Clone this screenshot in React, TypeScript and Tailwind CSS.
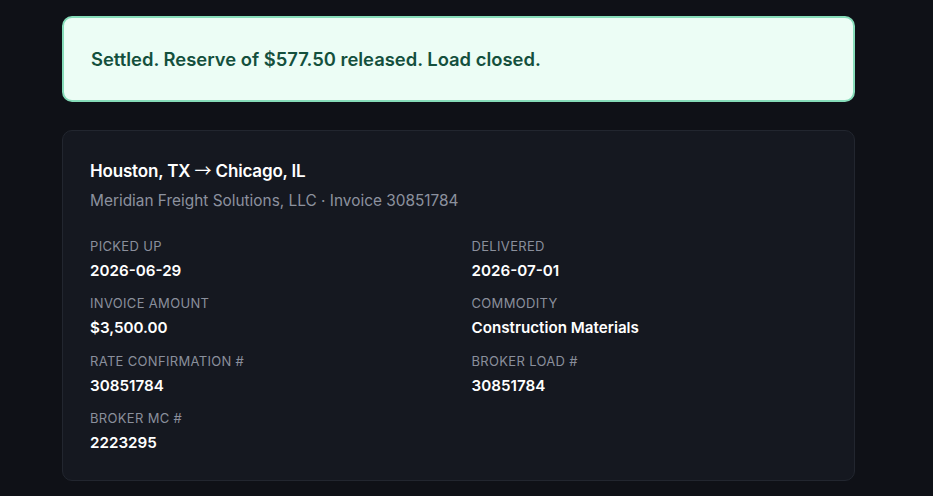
import React from "react";

const fields = [
  { label: "Picked up", value: "2026-06-29" },
  { label: "Delivered", value: "2026-07-01" },
  { label: "Invoice amount", value: "$3,500.00" },
  { label: "Commodity", value: "Construction Materials" },
  { label: "Rate confirmation #", value: "30851784" },
  { label: "Broker load #", value: "30851784" },
  { label: "Broker MC #", value: "2223295" },
];

const App = () => {
  return (
    <div
      className="min-h-screen bg-[#0f1117] pt-4 pb-4"
      style={{ fontFamily: "Inter, 'Noto Sans', sans-serif" }}
    >
      <div className="ml-[62px] w-[793px]">
        {/* settled banner */}
        <div className="h-[86px] flex items-center rounded-[10px] border-2 border-[#86dcb9] bg-[#ecfdf5] px-[27px] pt-[2px]">
          <p className="text-[18.4px] font-semibold text-[#14503d]">
            Settled. Reserve of $577.50 released. Load closed.
          </p>
        </div>

        {/* load details card */}
        <div className="mt-7 rounded-[10px] border border-[#22262f] bg-[#151820] px-[27px] pt-[28px] pb-[27px]">
          <h1 className="h-6 text-[17px] font-semibold tracking-[-0.01em] text-white leading-6">
            Houston, TX{" "}
            <span className="font-normal font-['Noto_Sans_CJK_SC'] tracking-normal leading-none">→</span>{" "}
            Chicago, IL
          </h1>
          <p className="mt-[6px] text-[15.4px] text-[#8c919e] leading-6">
            Meridian Freight Solutions, LLC · Invoice 30851784
          </p>

          <div className="mt-[23px] grid grid-cols-2 gap-x-[26px] gap-y-[12.3px]">
            {fields.map((f) => (
              <div key={f.label}>
                <div className="text-[13px] uppercase tracking-wide text-[#8a8f9c] leading-5">
                  {f.label}
                </div>
                <div className="mt-[5px] text-[15.2px] font-semibold text-white leading-5">
                  {f.value}
                </div>
              </div>
            ))}
          </div>
        </div>
      </div>
    </div>
  );
};

export default App;
